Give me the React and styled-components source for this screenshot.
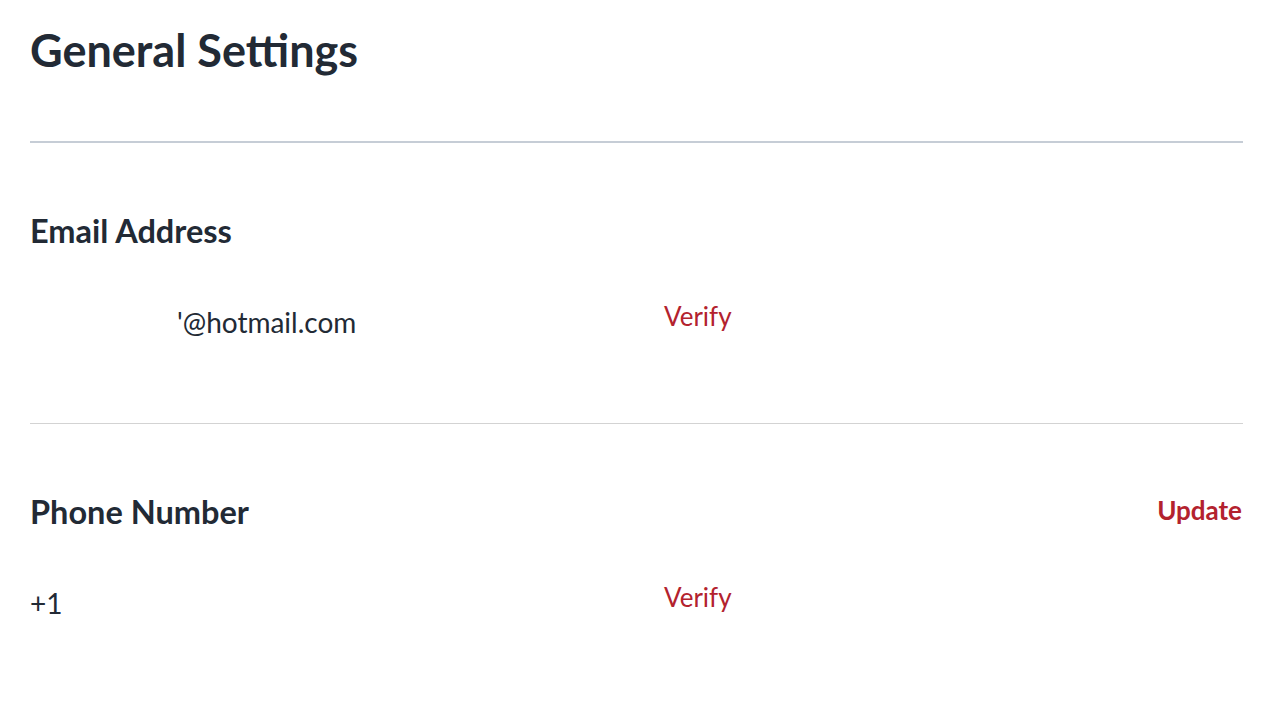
import styled, { createGlobalStyle } from "styled-components";

const GlobalStyle = createGlobalStyle`
  body {
    margin: 0;
    background: #ffffff;
    font-family: Lato, "Open Sans", sans-serif;
    color: #222a35;
  }
`;

const Page = styled.div`
  padding: 0 29px 0 30px;
`;

const Title = styled.h1`
  margin: 0;
  padding-top: 22px;
  height: 143px;
  box-sizing: border-box;
  font-size: 45px;
  font-weight: 700;
  line-height: 56px;
  border-bottom: 2px solid #c6cdd6;
`;

const Section = styled.section`
  padding: 68px 0 0;
  height: ${props => props.height}px;
  box-sizing: border-box;
  border-bottom: ${props => props.last ? "none" : "1px solid #d3d3d3"};
`;

const HeaderRow = styled.div`
  display: flex;
  justify-content: space-between;
  align-items: center;
`;

const Label = styled.h2`
  margin: 0;
  font-size: 32.5px;
  font-weight: 700;
  line-height: 40px;
`;

const ActionLink = styled.a`
  font-size: 26px;
  font-weight: ${props => props.bold ? 700 : 400};
  color: #b3222e;
  text-decoration: none;
  cursor: pointer;
  margin-right: ${props => props.bold ? 1 : 0}px;
  margin-top: ${props => props.bold ? -4 : 0}px;
`;

const ValueRow = styled.div`
  display: grid;
  grid-template-columns: 634px auto;
  align-items: center;
  margin-top: 42px;
`;

const Value = styled.div`
  font-size: 28px;
  line-height: 34px;
  padding-left: ${props => props.indent || 0}px;
  padding-top: 12px;
`;

export default function App() {
  return (
    <>
      <GlobalStyle />
      <Page>
        <Title>General Settings</Title>
        <Section height={281}>
          <HeaderRow>
            <Label>Email Address</Label>
          </HeaderRow>
          <ValueRow>
            <Value indent={147}>'@hotmail.com</Value>
            <ActionLink>Verify</ActionLink>
          </ValueRow>
        </Section>
        <Section last height={280}>
          <HeaderRow>
            <Label>Phone Number</Label>
            <ActionLink bold>Update</ActionLink>
          </HeaderRow>
          <ValueRow>
            <Value>+1</Value>
            <ActionLink>Verify</ActionLink>
          </ValueRow>
        </Section>
      </Page>
    </>
  );
}
